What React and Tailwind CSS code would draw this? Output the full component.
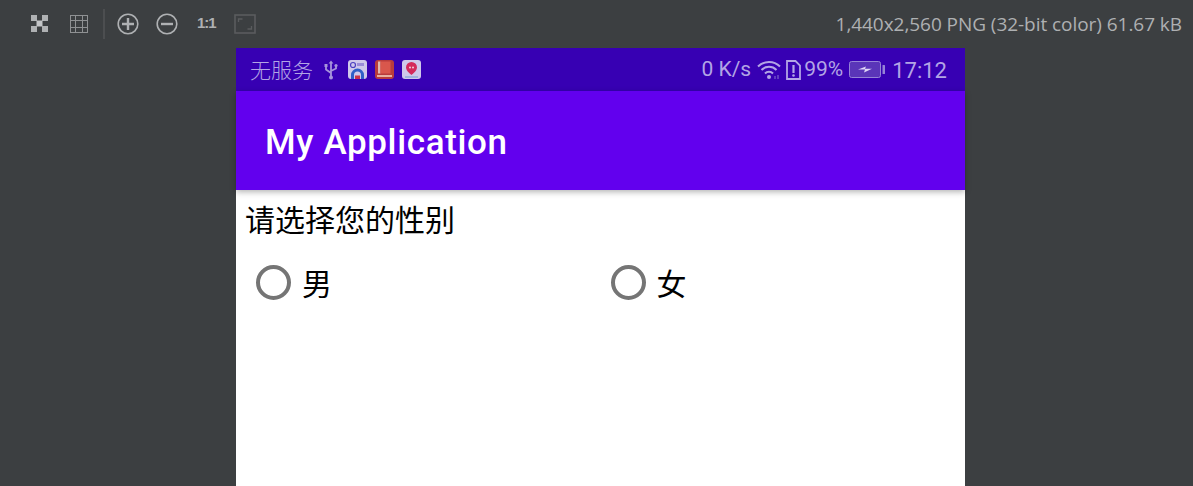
import { useState } from 'react'

function Checker() {
  return (
    <svg width="19" height="19" viewBox="0 0 19 19" fill="#afb1b3">
      <rect x="1" y="1" width="6" height="6" />
      <rect x="12" y="1" width="6" height="6" />
      <rect x="6.5" y="6.5" width="6" height="6" fill="#c4c6c8" />
      <rect x="1" y="12" width="6" height="6" />
      <rect x="12" y="12" width="6" height="6" />
    </svg>
  )
}

function GridIcon() {
  return (
    <svg width="18" height="18" viewBox="0 0 18 18" fill="none" stroke="#8f9193" strokeWidth="1">
      <rect x="0.5" y="0.5" width="17" height="17" />
      <path d="M5.5 .5v17M12.5 .5v17M.5 5.5h17M.5 12.5h17" />
    </svg>
  )
}

function ZoomIcon({ plus }) {
  return (
    <svg width="22" height="22" viewBox="0 0 22 22" fill="none" stroke="#afb1b3">
      <circle cx="11" cy="11" r="9.8" strokeWidth="1.6" />
      <path d={plus ? 'M5 11h12M11 5v12' : 'M5 11h12'} strokeWidth="2.4" />
    </svg>
  )
}

function FitIcon() {
  return (
    <svg width="22" height="20" viewBox="0 0 22 20" fill="none" stroke="#5a5c5e" strokeWidth="1.6">
      <rect x="1" y="1" width="20" height="18" />
      <path d="M4.5 8V5h4M17.5 12v3h-4" strokeWidth="1.3" />
    </svg>
  )
}

function UsbIcon() {
  return (
    <svg width="14" height="20" viewBox="0 0 14 20" fill="none" stroke="#a794dc" strokeWidth="1.8">
      <path d="M7 2v16M2 6v3.5L7 13M12 6v2.5L7 11" />
      <path d="M7 0.5l2.4 3H4.6z" fill="#a794dc" stroke="none" />
      <circle cx="7" cy="17.5" r="2" fill="#a794dc" stroke="none" />
      <rect x="0.5" y="4" width="3" height="3" fill="#a794dc" stroke="none" />
      <circle cx="12" cy="5.5" r="1.6" fill="#a794dc" stroke="none" />
    </svg>
  )
}

function AppIcon1() {
  return (
    <svg width="19" height="19" viewBox="0 0 19 19">
      <rect width="19" height="19" rx="3" fill="#cfc8ea" />
      <circle cx="5" cy="5" r="2.5" fill="none" stroke="#4a3fc0" strokeWidth="1.2" />
      <rect x="9" y="3" width="7" height="3" fill="#9a8cd8" />
      <path d="M3 19v-4a6.5 6.5 0 0 1 13 0v4h-3v-4a3.5 3.5 0 0 0-7 0v4z" fill="#2f5fc8" />
      <rect x="7" y="15.5" width="5" height="3.5" fill="#c8324a" />
    </svg>
  )
}

function AppIcon2() {
  return (
    <svg width="19" height="19" viewBox="0 0 19 19">
      <rect width="19" height="19" rx="3" fill="#b83c3c" />
      <rect x="3" y="1.5" width="2.5" height="12" fill="#e0b8b0" />
      <rect x="5.5" y="1.5" width="10" height="12" fill="#d9574c" />
      <rect x="2" y="15" width="15" height="2" fill="#e8b0a0" />
    </svg>
  )
}

function AppIcon3() {
  return (
    <svg width="19" height="19" viewBox="0 0 19 19">
      <rect width="19" height="19" rx="3" fill="#cfc8ea" />
      <path d="M9.5 2a5.5 5.5 0 0 1 5.5 5.5c0 3.5-5.5 7.5-5.5 7.5S4 11 4 7.5A5.5 5.5 0 0 1 9.5 2z" fill="#d42a5c" />
      <circle cx="8" cy="7.5" r="1" fill="#f4d0dc" />
      <circle cx="11" cy="7.5" r="1" fill="#f4d0dc" />
      <rect x="3" y="16" width="13" height="2" fill="#9fb4dc" />
    </svg>
  )
}

function WifiIcon() {
  return (
    <svg width="24" height="20" viewBox="0 0 24 20" fill="none" stroke="#b3a5e5" strokeWidth="2">
      <path d="M1 6.5a15.5 15.5 0 0 1 22 0M4.5 10a10.5 10.5 0 0 1 15 0M8 13.5a5.5 5.5 0 0 1 8 0" />
      <circle cx="12" cy="17" r="2" fill="#b3a5e5" stroke="none" />
      <path d="M18 16v3M21 15v4" strokeWidth="1" stroke="#8a74d0" />
    </svg>
  )
}

function SimAlertIcon() {
  return (
    <svg width="15" height="20" viewBox="0 0 15 20" fill="none" stroke="#b3a5e5" strokeWidth="1.8">
      <path d="M1 1h8.5L14 5.5V19H1z" />
      <path d="M7.5 5v8" strokeWidth="2.2" />
      <circle cx="7.5" cy="15.5" r="1.3" fill="#b3a5e5" stroke="none" />
    </svg>
  )
}

function BatteryIcon() {
  return (
    <svg width="37" height="17" viewBox="0 0 37 17">
      <rect x="0.5" y="0.5" width="31" height="16" rx="2" fill="#5a35b8" stroke="#9583d6" />
      <path d="M9 8.5l8-3-1 2.3h7l-8 3.6 1-2.9z" fill="#e0d8f6" />
      <rect x="33.5" y="4" width="2.5" height="9" rx="0.5" fill="#9583d6" />
    </svg>
  )
}

function Radio({ label, checked, onPick }) {
  return (
    <button onClick={onPick} className="flex-1 flex items-center pl-[10px] h-[48px] text-left">
      <span className={`w-[35px] h-[35px] rounded-full border-[4px] flex items-center justify-center ${checked ? 'border-[#03dac5]' : 'border-[#757575]'}`}>
        {checked && <span className="w-[17px] h-[17px] rounded-full bg-[#03dac5]" />}
      </span>
      <span className="ml-[11px] text-[30px] leading-[36px] text-black font-['Noto_Sans_CJK_SC',sans-serif]">{label}</span>
    </button>
  )
}

export default function App() {
  const [gender, setGender] = useState(null)

  return (
    <div className="h-[486px] overflow-hidden bg-[#3c3f41] flex flex-col">
      <div className="w-full h-[48px] shrink-0 flex items-center justify-between pr-[11px] pl-[30px]">
        <div className="flex items-center pb-[1px]">
          <Checker />
          <div className="ml-[21px]"><GridIcon /></div>
          <div className="ml-[15px] w-[2px] h-[30px] bg-[#4c4e50]" />
          <div className="ml-[12px]"><ZoomIcon plus /></div>
          <div className="ml-[17px]"><ZoomIcon /></div>
          <div className="ml-[19px] w-[19px] text-[15px] font-bold tracking-[-1px] text-[#afb1b3] font-['Liberation_Sans',sans-serif]">1:1</div>
          <div className="ml-[18px]"><FitIcon /></div>
        </div>
        <div className="text-[19px] tracking-[-0.05px] text-[#aeb0b2] font-['Open_Sans',sans-serif]">1,440x2,560 PNG (32-bit color) 61.67 kB</div>
      </div>

      <div className="ml-[236px] w-[729px] flex-1 bg-white flex flex-col">
        <div className="h-[43px] shrink-0 bg-[#3700b3] flex items-center justify-between pl-[14px] pr-[18px] text-[#b3a5e5]">
          <div className="flex items-center">
            <span className="text-[21px] font-['Noto_Sans_CJK_SC',sans-serif] font-light">无服务</span>
            <div className="ml-[11px]"><UsbIcon /></div>
            <div className="ml-[10px]"><AppIcon1 /></div>
            <div className="ml-[8px]"><AppIcon2 /></div>
            <div className="ml-[8px]"><AppIcon3 /></div>
          </div>
          <div className="flex items-center font-['Roboto',sans-serif] text-[21px]">
            <span className="pt-[1px]">0 K/s</span>
            <div className="ml-[6px]"><WifiIcon /></div>
            <div className="ml-[5px]"><SimAlertIcon /></div>
            <span className="ml-[3px] pt-[1px]">99%</span>
            <div className="ml-[6px]"><BatteryIcon /></div>
            <span className="ml-[6px] pt-[1px] text-[22px]">17:12</span>
          </div>
        </div>

        <div className="h-[99px] shrink-0 bg-[#6200ee] flex items-center pl-[29px] pt-[6px] shadow-[0_2px_6px_rgba(0,0,0,0.3)] relative">
          <h1 className="text-[35px] tracking-[0.65px] font-medium text-white font-['Roboto',sans-serif]">My Application</h1>
        </div>

        <div className="px-[10px]">
          <p className="mt-[8px] -ml-[1px] text-[30px] leading-[40px] text-black font-['Noto_Sans_CJK_SC',sans-serif]">请选择您的性别</p>
          <div className="flex mt-[20px]">
            <Radio label="男" checked={gender === 'm'} onPick={() => setGender('m')} />
            <Radio label="女" checked={gender === 'f'} onPick={() => setGender('f')} />
          </div>
        </div>
      </div>
    </div>
  )
}
